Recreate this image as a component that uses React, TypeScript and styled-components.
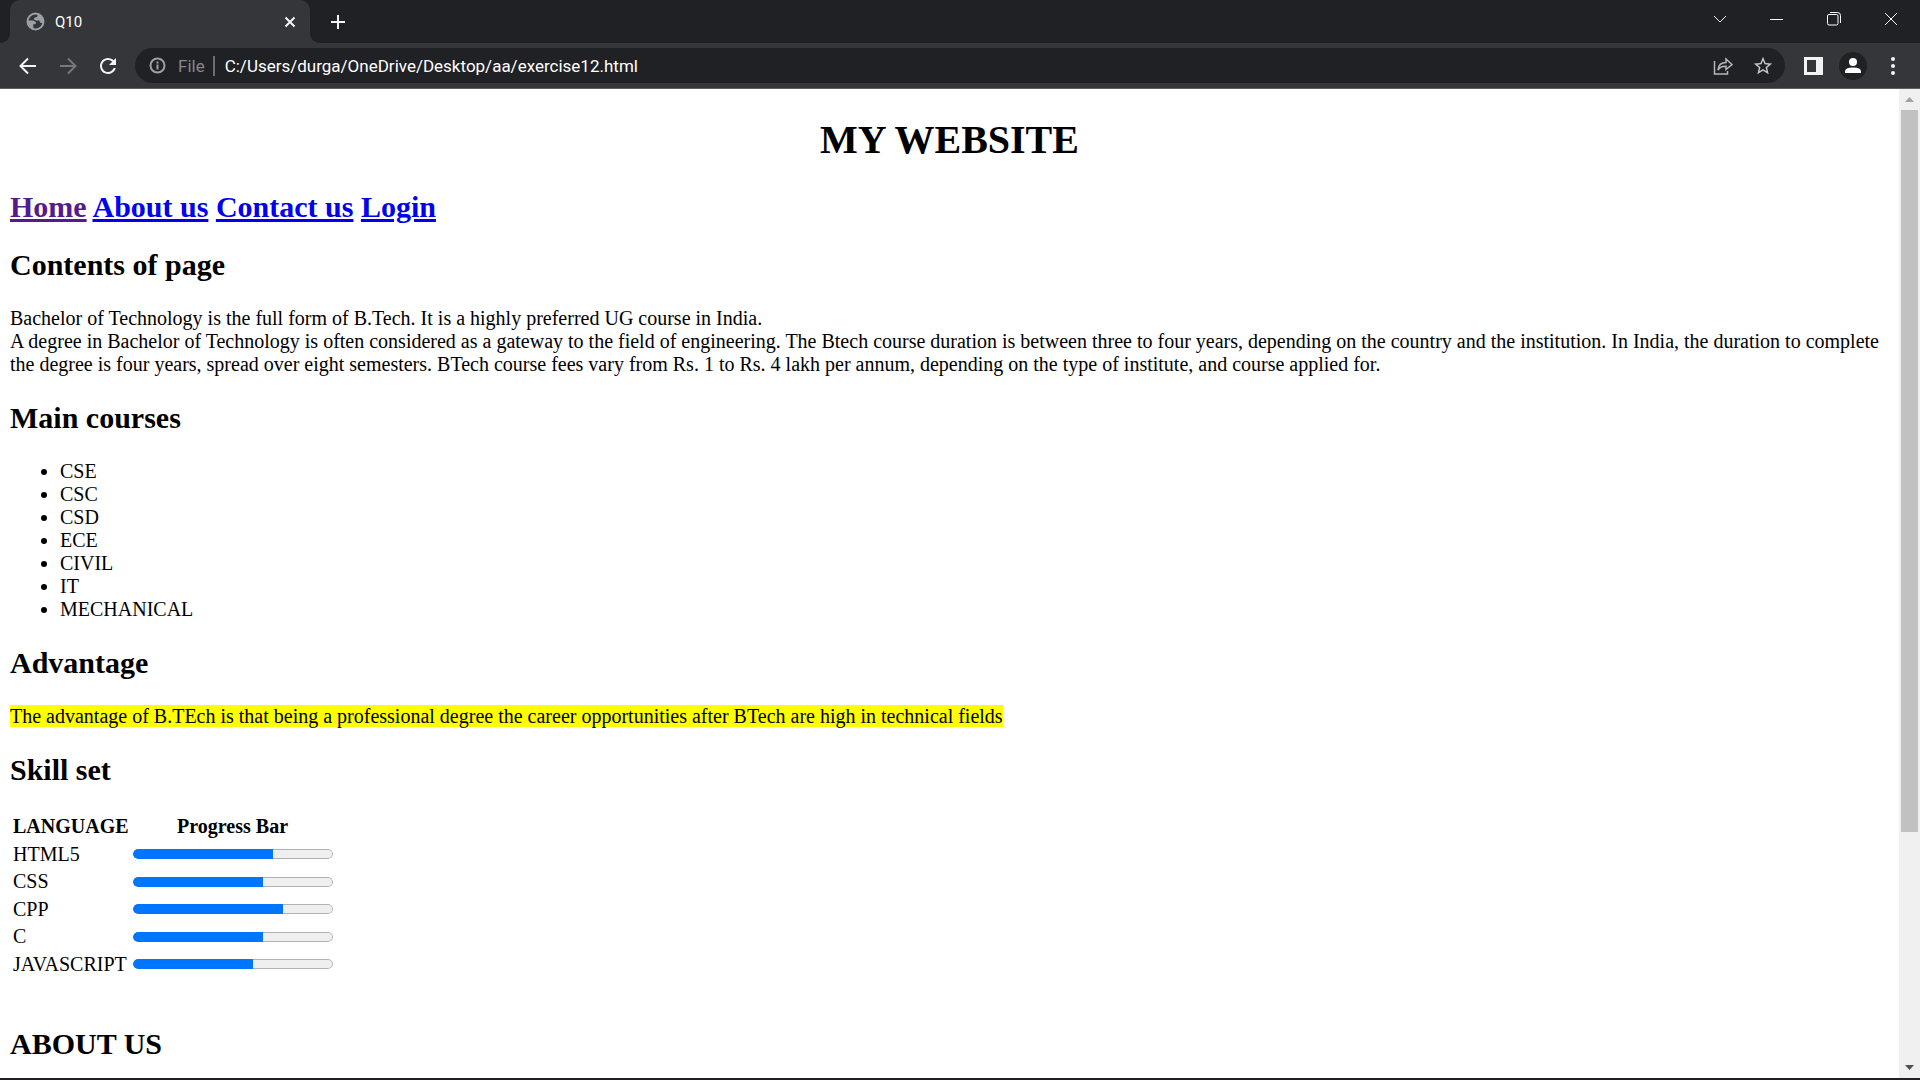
import React from 'react';
import styled, { createGlobalStyle } from 'styled-components';

const GlobalStyle = createGlobalStyle`
  *, *::before, *::after { box-sizing: border-box; }
  body { margin: 0; background: #fff; }
`;

const uiFont = `Roboto, "Open Sans", sans-serif`;

const Window = styled.div`
  display: flex;
  flex-direction: column;
  height: 100vh;
  overflow: hidden;
  border-bottom: 2px solid #231f24;
`;

const TabStrip = styled.div`
  display: flex;
  align-items: stretch;
  height: 43px;
  padding: 0 1px 0 10px;
  background: #202124;
`;

const Tab = styled.div`
  position: relative;
  display: flex;
  align-items: center;
  width: 300px;
  padding: 0 14px 0 15px;
  border-radius: 10px 10px 0 0;
  background: #35363a;
  color: #fff;
  font: 15px/20px ${uiFont};

  &::before, &::after {
    content: '';
    position: absolute;
    bottom: 0;
    width: 10px;
    height: 10px;
  }
  &::before {
    right: 100%;
    background: radial-gradient(circle at 0 0, #202124 10px, #35363a 10px);
  }
  &::after {
    left: 100%;
    background: radial-gradient(circle at 100% 0, #202124 10px, #35363a 10px);
  }
`;

const TabTitle = styled.span`
  flex: 1;
  padding-left: 9px;
`;

const IconButton = styled.button<{ $w: number; $h?: number }>`
  display: flex;
  align-items: center;
  justify-content: center;
  flex: none;
  width: ${p => p.$w}px;
  height: ${p => p.$h ?? 35}px;
  padding: 0;
  border: 0;
  background: none;
  color: #f1f3f4;
`;

const WindowControls = styled.div`
  display: flex;
  margin-left: auto;
`;

const Toolbar = styled.div`
  display: flex;
  align-items: center;
  height: 46px;
  padding: 0 7px 0 8px;
  border-bottom: 1px solid #5d5e62;
  background: #35363a;
`;

const AddressBar = styled.div`
  display: flex;
  flex: 1;
  align-items: center;
  height: 35px;
  margin: 0 8px 0 7px;
  padding: 0 2px 0 14px;
  border-radius: 18px;
  background: #202124;
  color: #9aa0a6;
  font: 17px/24px ${uiFont};
`;

const Scheme = styled.label`
  margin-left: 12px;
  padding-right: 8px;
  line-height: 20px;
  color: #85888c;
  border-right: 2px solid #6b6d71;
`;

const Url = styled.input`
  flex: 1;
  min-width: 0;
  padding: 0 0 0 10px;
  border: 0;
  outline: 0;
  background: none;
  color: #fff;
  font: inherit;
`;

const Viewport = styled.div`
  display: flex;
  flex: 1;
  min-height: 0;
`;

const Document = styled.main`
  flex: 1;
  min-width: 0;
  overflow: hidden;
  padding: 28px 10px 0;
  background: #fff;
  color: #000;
  font: 20px/23px "Liberation Serif", "Times New Roman", serif;
`;

const Title = styled.h1`
  margin: 0 0 27px;
  font-size: 40px;
  line-height: 46px;
  text-align: center;
`;

const Heading = styled.h2`
  margin: 25px 0;
  font-size: 30px;
  line-height: 34px;
`;

const Nav = styled.nav`
  font-size: 30px;
  font-weight: bold;
  line-height: 34px;

  & + ${Heading} { margin-top: 24px; }
`;

const NavLink = styled.a<{ $visited?: boolean }>`
  color: ${p => (p.$visited ? '#551a8b' : '#0000ee')};
`;

const Text = styled.p`
  margin: 0;
`;

const Courses = styled.ul`
  margin: 0;
  padding-left: 50px;
`;

const Highlight = styled.mark`
  background: #ff0;
  color: #000;
`;

const Skills = styled.table`
  margin-bottom: 48px;
  border-spacing: 2px;

  th, td { height: 25px; padding: 1px; line-height: 23px; }
  tbody tr:nth-child(odd) td { height: 26px; }
`;

const Meter = styled.progress`
  display: block;
  appearance: none;
  width: 200px;
  height: 10px;
  overflow: hidden;
  border: 0;
  border-radius: 5px;
  background: #efefef;

  &::-webkit-progress-bar {
    border-radius: 5px;
    background: #efefef;
    box-shadow: inset 0 0 0 1px #b2b2b2;
  }
  &::-webkit-progress-value {
    border-radius: 5px 0 0 5px;
    background: #0075ff;
  }
`;

const ScrollBar = styled.div`
  display: flex;
  flex-direction: column;
  width: 21px;
  background: #f0f0f0;
`;

const Track = styled.div`
  display: flex;
  flex: 1;
  flex-direction: column;
  padding: 0 2px;

  &::after {
    content: '';
    flex: 5;
  }
`;

const Thumb = styled.div`
  flex: 16;
  background: #c1c1c1;
`;

const courses = ['CSE', 'CSC', 'CSD', 'ECE', 'CIVIL', 'IT', 'MECHANICAL'];

const skills = [
  { name: 'HTML5', value: 70 },
  { name: 'CSS', value: 65 },
  { name: 'CPP', value: 75 },
  { name: 'C', value: 65 },
  { name: 'JAVASCRIPT', value: 60 },
];

type LineIconProps = { size: number; box?: number; d: string; width?: number; color?: string };

const LineIcon = ({ size, box = size, d, width = 2, color = 'currentColor' }: LineIconProps) => (
  <svg width={size} height={size} viewBox={`0 0 ${box} ${box}`} fill="none" stroke={color} strokeWidth={width} aria-hidden="true">
    <path d={d} />
  </svg>
);

const SolidIcon = ({ size, d, color = 'currentColor' }: { size: number; d: string; color?: string }) => (
  <svg width={size} height={size} viewBox="0 0 24 24" fill={color} aria-hidden="true">
    <path d={d} />
  </svg>
);

export default function App() {
  return (
    <>
      <GlobalStyle />
      <Window>
        <TabStrip>
          <Tab>
            <svg width="21" height="21" viewBox="0 0 21 21" fill="none" aria-hidden="true">
              <circle cx="10.500" cy="10.500" r="8" stroke="#9aa0a6" strokeWidth="2" />
              <path fill="#9aa0a6" d="M2 9.500h5.500q3 .300 3.500 2q.300 1.500-1.500 1.800H8.300V16L9 18.500Q3 17 2 9.500zM12.500 2.500Q18 4 19 10.500q-1.500 2-3 1.500q-1.500-.500-1.500-2.500h-4q-1.800-.500-1.500-2q.500-1.300 2-1.300q1.500 0 1.500-1.700z" />
            </svg>
            <TabTitle>Q10</TabTitle>
            <IconButton $w={12} $h={20} aria-label="Close tab">
              <LineIcon size={12} d="M1.500 1.500l9 9M10.500 1.500l-9 9" />
            </IconButton>
          </Tab>
          <IconButton $w={55} $h={43} aria-label="New tab">
            <LineIcon size={16} d="M8 1v14M1 8h14" />
          </IconButton>
          <WindowControls>
            <IconButton $w={57} $h={37} aria-label="Search tabs">
              <LineIcon size={14} width={1} d="M1 4l6 6l6-6" />
            </IconButton>
            <IconButton $w={57} $h={37} aria-label="Minimize">
              <LineIcon size={14} width={1} d="M0 7.500h13" color="#fff" />
            </IconButton>
            <IconButton $w={57} $h={37} aria-label="Restore">
              <LineIcon size={14} width={1} color="#fff" d="M2 2.500h7.500a1.500 1.500 0 0 1 1.500 1.500v7.500a1.500 1.500 0 0 1-1.500 1.500H2A1.500 1.500 0 0 1 .500 11.500V4A1.500 1.500 0 0 1 2 2.500zM3 .500h7.500a3 3 0 0 1 3 3V11" />
            </IconButton>
            <IconButton $w={57} $h={37} aria-label="Close window">
              <LineIcon size={14} width={1} color="#fff" d="M1 1l12 12M13 1L1 13" />
            </IconButton>
          </WindowControls>
        </TabStrip>

        <Toolbar>
          <IconButton $w={40} aria-label="Back">
            <LineIcon size={18} d="M17 9H2M9 1.500L1.500 9L9 16.500" />
          </IconButton>
          <IconButton $w={40} aria-label="Forward">
            <LineIcon size={18} color="#77787b" d="M1 9h15M9 1.500L16.500 9L9 16.500" />
          </IconButton>
          <IconButton $w={40} aria-label="Reload">
            <SolidIcon size={24} d="M17.650 6.350C16.200 4.900 14.210 4 12 4c-4.420 0-7.990 3.580-7.990 8s3.570 8 7.990 8c3.730 0 6.840-2.550 7.730-6h-2.080c-.820 2.330-3.040 4-5.650 4-3.310 0-6-2.690-6-6s2.690-6 6-6c1.660 0 3.140.690 4.220 1.780L13 11h7V4l-2.350 2.350z" />
          </IconButton>
          <AddressBar>
            <LineIcon size={17} color="#9aa0a6" width={2} d="M8.500 1.500a7 7 0 1 1 0 14a7 7 0 0 1 0-14zM8.500 7.500v5M8.500 4.500v2" />
            <Scheme htmlFor="url">File</Scheme>
            <Url id="url" readOnly value="C:/Users/durga/OneDrive/Desktop/aa/exercise12.html" />
            <IconButton $w={40} aria-label="Share this page">
              <svg width="20" height="20" viewBox="0 0 20 20" fill="none" stroke="#b4b6b9" aria-hidden="true">
                <path d="M1.500 5v13h13v-3" strokeWidth="1.500" />
                <path d="M5 14q.500-7.500 8-7.500V3l6 5.500l-6 5V10.300Q7.500 10 5 14z" strokeWidth="1.500" />
              </svg>
            </IconButton>
            <IconButton $w={40} aria-label="Bookmark this tab">
              <SolidIcon size={22} color="#c6c7c9" d="M22 9.240l-7.190-.620L12 2 9.190 8.630 2 9.240l5.460 4.730L5.820 21 12 17.270 18.180 21l-1.630-7.030L22 9.240zM12 15.400l-3.760 2.270 1-4.280-3.320-2.880 4.380-.380L12 6.100l1.710 4.040 4.380.380-3.320 2.880 1 4.280L12 15.400z" />
            </IconButton>
          </AddressBar>
          <IconButton $w={40} aria-label="Side panel">
            <svg width="19" height="18" viewBox="0 0 19 18" aria-hidden="true">
              <path fill="currentColor" fillRule="evenodd" d="M0 0h19v18H0zM3 3v12h9V3z" />
            </svg>
          </IconButton>
          <IconButton $w={40} aria-label="Profile">
            <svg width="28" height="28" viewBox="0 0 28 28" aria-hidden="true">
              <circle cx="14" cy="14" r="14" fill="#202124" />
              <circle cx="14" cy="10" r="4" fill="#fff" />
              <path fill="#fff" d="M6 21v-1.500q0-4 8-4t8 4V21z" />
            </svg>
          </IconButton>
          <IconButton $w={40} aria-label="Menu">
            <svg width="4" height="18" viewBox="0 0 4 18" fill="currentColor" aria-hidden="true">
              <circle cx="2" cy="2" r="2" />
              <circle cx="2" cy="9" r="2" />
              <circle cx="2" cy="16" r="2" />
            </svg>
          </IconButton>
        </Toolbar>

        <Viewport>
          <Document>
            <Title>MY WEBSITE</Title>
            <Nav>
              <NavLink href="#home" $visited>Home</NavLink>{' '}
              <NavLink href="#about">About us</NavLink>{' '}
              <NavLink href="#contact">Contact us</NavLink>{' '}
              <NavLink href="#login">Login</NavLink>
            </Nav>
            <Heading>Contents of page</Heading>
            <Text>
              Bachelor of Technology is the full form of B.Tech. It is a highly preferred UG course in India.
              <br />
              A degree in Bachelor of Technology is often considered as a gateway to the field of engineering. The
              Btech course duration is between three to four years, depending on the country and the institution. In
              India, the duration to complete the degree is four years, spread over eight semesters. BTech course fees
              vary from Rs. 1 to Rs. 4 lakh per annum, depending on the type of institute, and course applied for.
            </Text>
            <Heading>Main courses</Heading>
            <Courses>
              {courses.map(c => <li key={c}>{c}</li>)}
            </Courses>
            <Heading>Advantage</Heading>
            <Text>
              <Highlight>
                The advantage of B.TEch is that being a professional degree the career opportunities after BTech are
                high in technical fields
              </Highlight>
            </Text>
            <Heading>Skill set</Heading>
            <Skills>
              <thead>
                <tr>
                  <th scope="col">LANGUAGE</th>
                  <th scope="col">Progress Bar</th>
                </tr>
              </thead>
              <tbody>
                {skills.map(s => (
                  <tr key={s.name}>
                    <td><label htmlFor={s.name}>{s.name}</label></td>
                    <td><Meter id={s.name} max={100} value={s.value} /></td>
                  </tr>
                ))}
              </tbody>
            </Skills>
            <Heading id="about">ABOUT US</Heading>
          </Document>
          <ScrollBar>
            <IconButton $w={21} $h={21} aria-label="Scroll up">
              <svg width="9" height="5" viewBox="0 0 9 5" aria-hidden="true"><path fill="#a3a3a3" d="M0 5L4.500 0L9 5z" /></svg>
            </IconButton>
            <Track><Thumb /></Track>
            <IconButton $w={21} $h={21} aria-label="Scroll down">
              <svg width="9" height="5" viewBox="0 0 9 5" aria-hidden="true"><path fill="#505050" d="M0 0h9L4.500 5z" /></svg>
            </IconButton>
          </ScrollBar>
        </Viewport>
      </Window>
    </>
  );
}
